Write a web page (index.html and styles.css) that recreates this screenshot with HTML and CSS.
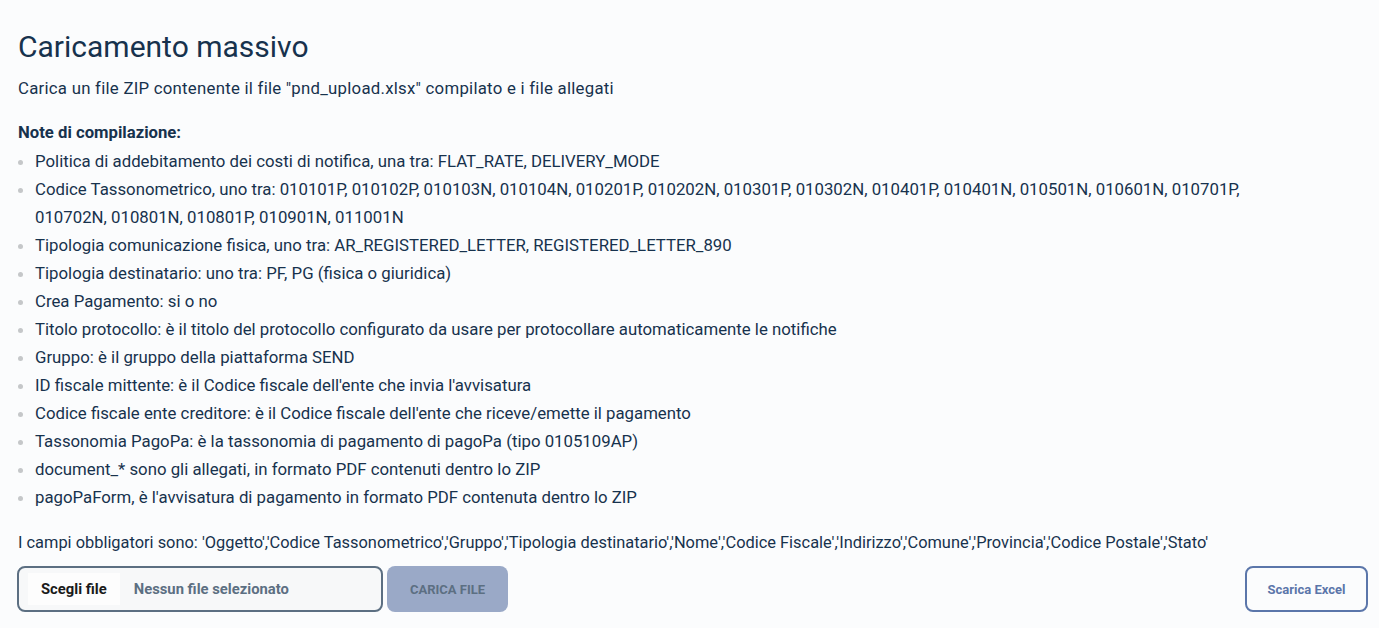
FILE: index.html
```html
<!DOCTYPE html>
<html lang="it">
<head>
<meta charset="utf-8">
<title>Caricamento massivo</title>
<link rel="stylesheet" href="styles.css">
</head>
<body>
<main class="page">
  <h1 class="title">Caricamento massivo</h1>
  <p class="subtitle">Carica un file ZIP contenente il file "pnd_upload.xlsx" compilato e i file allegati</p>
  <h2 class="notes-title">Note di compilazione:</h2>
  <ul class="notes">
    <li>Politica di addebitamento dei costi di notifica, una tra: FLAT_RATE, DELIVERY_MODE</li>
    <li>Codice Tassonometrico, uno tra: 010101P, 010102P, 010103N, 010104N, 010201P, 010202N, 010301P, 010302N, 010401P, 010401N, 010501N, 010601N, 010701P, 010702N, 010801N, 010801P, 010901N, 011001N</li>
    <li>Tipologia comunicazione fisica, uno tra: AR_REGISTERED_LETTER, REGISTERED_LETTER_890</li>
    <li>Tipologia destinatario: uno tra: PF, PG (fisica o giuridica)</li>
    <li>Crea Pagamento: si o no</li>
    <li>Titolo protocollo: è il titolo del protocollo configurato da usare per protocollare automaticamente le notifiche</li>
    <li>Gruppo: è il gruppo della piattaforma SEND</li>
    <li>ID fiscale mittente: è il Codice fiscale dell'ente che invia l'avvisatura</li>
    <li>Codice fiscale ente creditore: è il Codice fiscale dell'ente che riceve/emette il pagamento</li>
    <li>Tassonomia PagoPa: è la tassonomia di pagamento di pagoPa (tipo 0105109AP)</li>
    <li>document_* sono gli allegati, in formato PDF contenuti dentro lo ZIP</li>
    <li>pagoPaForm, è l'avvisatura di pagamento in formato PDF contenuta dentro lo ZIP</li>
  </ul>
  <p class="required">I campi obbligatori sono: 'Oggetto','Codice Tassonometrico','Gruppo','Tipologia destinatario','Nome','Codice Fiscale','Indirizzo','Comune','Provincia','Codice Postale','Stato'</p>
  <div class="actions">
    <label class="file-input">
      <span class="file-btn">Scegli file</span>
      <span class="file-name">Nessun file selezionato</span>
    </label>
    <button class="btn-upload" type="button" disabled>CARICA FILE</button>
    <button class="btn-excel" type="button">Scarica Excel</button>
  </div>
</main>
</body>
</html>
```
FILE: styles.css
```css
html, body {
  margin: 0;
  padding: 0;
  background: #fbfcfd;
}
body {
  font-family: Roboto, "Liberation Sans", sans-serif;
  color: #17324d;
}
.page {
  padding: 27px 11px 0 18px;
}
.title {
  margin: 0;
  font-size: 30px;
  font-weight: 400;
  line-height: 40px;
  color: #17324d;
}
.subtitle {
  margin: 7px 0 0;
  font-size: 16.8px;
  letter-spacing: 0.25px;
  line-height: 28px;
}
.notes-title {
  margin: 17px 0 0;
  font-size: 16.7px;
  font-weight: 700;
  line-height: 28px;
}
.notes {
  margin: 0;
  padding: 0 64px 0 17px;
  font-size: 16.8px;
  line-height: 28px;
}
.notes li::marker {
  color: #c5c7c9;
}
.required {
  margin: 18px 0 0;
  font-size: 16.4px;
  line-height: 28px;
}
.actions {
  margin-top: 9px;
  display: flex;
  align-items: stretch;
  gap: 4px;
  height: 46px;
}
.file-input {
  box-sizing: border-box;
  width: 366px;
  margin-left: -1px;
  border: 2px solid #5c6f82;
  border-radius: 8px;
  display: flex;
  align-items: center;
  padding: 5px 9px;
  background: #f7f8f9;
  font-size: 14.8px;
  font-weight: 700;
}
.file-btn {
  align-self: stretch;
  display: flex;
  align-items: center;
  padding: 0 13px;
  background: #fdfdfd;
  color: #1a1a1a;
}
.file-name {
  margin-left: 14px;
  color: #5c6f82;
}
.btn-upload {
  box-sizing: border-box;
  width: 121px;
  border: none;
  border-radius: 8px;
  background: #9aa9c7;
  color: #5c6f82;
  font-family: inherit;
  font-size: 13px;
  font-weight: 700;
}
.btn-excel {
  box-sizing: border-box;
  margin-left: auto;
  width: 123px;
  border: 2px solid #5b76aa;
  border-radius: 8px;
  background: transparent;
  color: #5b76aa;
  font-family: inherit;
  font-size: 13px;
  font-weight: 700;
}
```
